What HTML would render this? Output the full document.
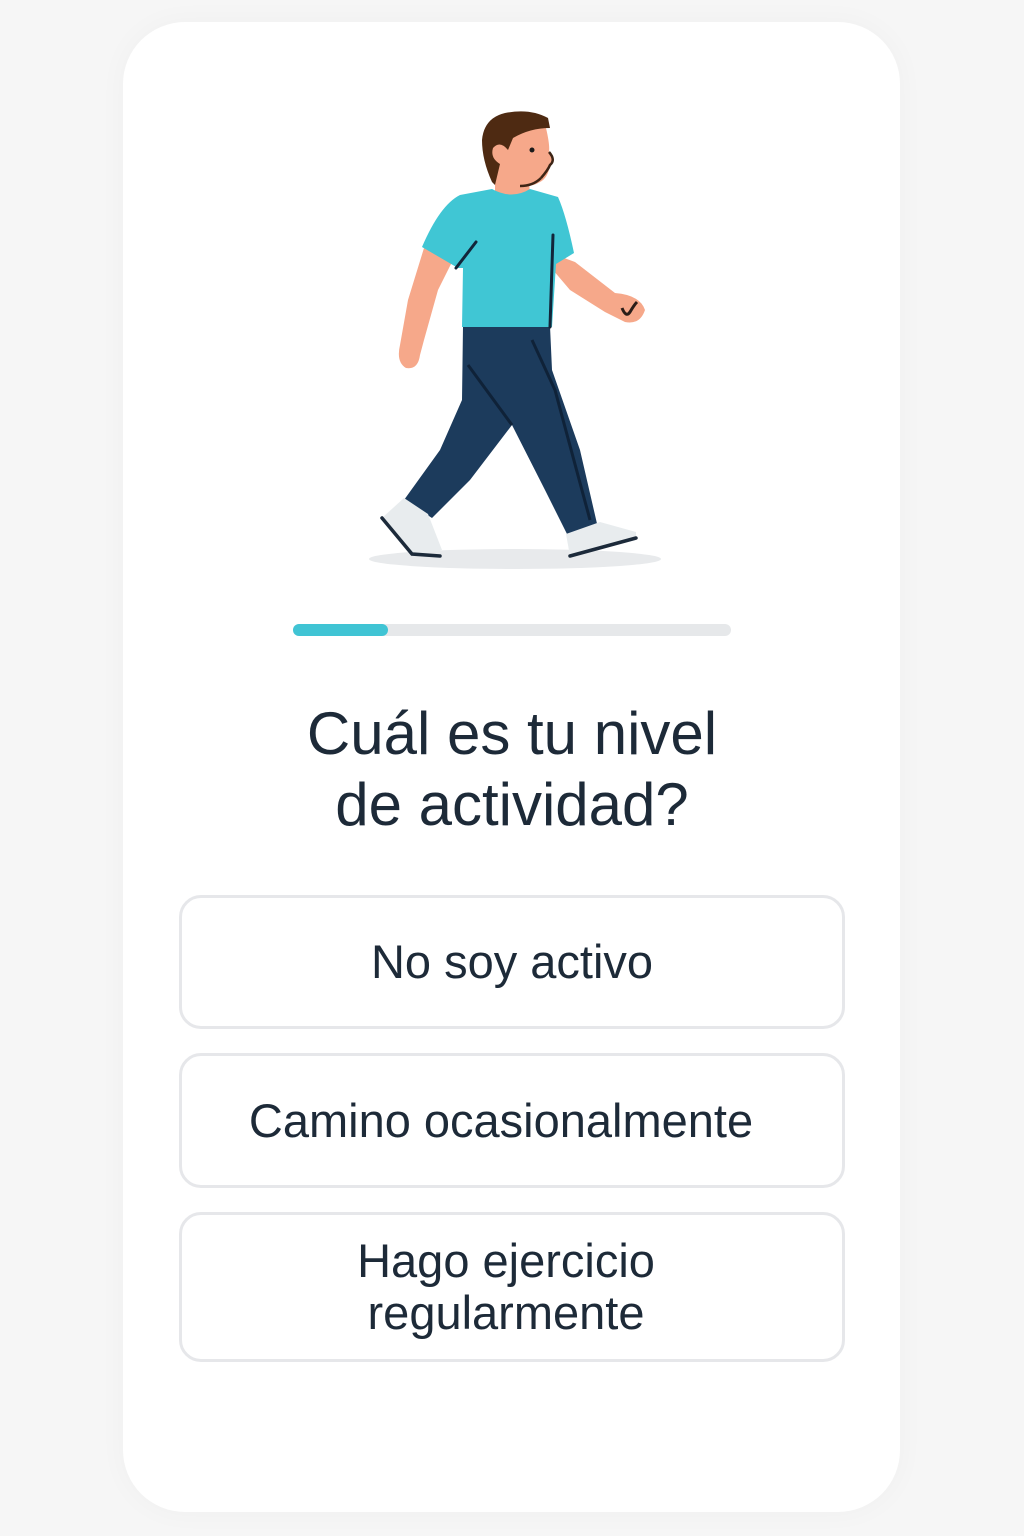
<!DOCTYPE html>
<html><head><meta charset="utf-8"><style>
html,body{margin:0;padding:0;}
body{width:1024px;height:1536px;background:#f6f6f6;position:relative;overflow:hidden;font-family:"Liberation Sans",sans-serif;color:#1d2a38;}
.card{position:absolute;left:123px;top:22px;width:777px;height:1490px;background:#fff;border-radius:62px;box-shadow:0 0 30px rgba(0,0,0,0.03);}
.bar{position:absolute;left:293px;top:624px;width:438px;height:12px;border-radius:6px;background:#e6e8ea;}
.bar i{position:absolute;left:0;top:0;width:95px;height:12px;border-radius:6px;background:#40c4d4;}
.title{position:absolute;left:0;width:1024px;top:698px;text-align:center;font-size:60px;line-height:71px;font-weight:500;color:#1d2a38;}
.btn{position:absolute;left:179px;width:660px;border:3px solid #e6e7ea;border-radius:22px;box-sizing:content-box;display:flex;align-items:center;justify-content:center;text-align:center;font-size:47px;line-height:52px;color:#1d2a38;}
svg{position:absolute;left:0;top:0;}
</style></head><body>
<div class="card"></div>
<svg width="1024" height="600" viewBox="0 0 1024 600">
<ellipse cx="515" cy="559" rx="146" ry="10" fill="#e8eaec"/>
<path d="M424 248 L408 300 L400 345 Q396 362 406 368 Q418 370 420 355 L424 340 L438 290 L452 262 Z" fill="#f6a88a"/>
<path d="M556 255 L575 262 L615 293 Q640 295 645 310 Q640 325 625 322 L605 312 L570 290 L553 270 Z" fill="#f6a88a"/>
<path d="M622 308 Q626 318 630 312 Q634 305 637 302" stroke="#2a1d18" stroke-width="3" fill="none"/>
<path d="M463 326 L550 326 L552 370 L580 450 L598 528 L568 536 L545 490 L512 425 L470 480 L432 518 L404 500 L440 450 L462 400 Z" fill="#1c3b5c"/>
<path d="M468 365 L512 425" stroke="#0f2238" stroke-width="3" fill="none"/>
<path d="M532 340 L555 390 L590 520" stroke="#0f2238" stroke-width="3" fill="none"/>
<path d="M382 518 L404 498 L428 514 L442 550 L412 556 Z" fill="#e8ecee"/>
<path d="M382 518 L412 554 L440 556" stroke="#1c2a3a" stroke-width="3.5" fill="none" stroke-linecap="round"/>
<path d="M566 534 L600 522 L636 532 L636 540 L570 556 Z" fill="#e8ecee"/>
<path d="M570 556 L636 538" stroke="#1c2a3a" stroke-width="3.5" fill="none" stroke-linecap="round"/>
<path d="M495 170 L528 170 L530 195 L495 195 Z" fill="#f6a88a"/>
<path d="M492 189 Q512 200 530 189 L558 197 Q566 215 574 253 L556 264 L552 327 L462 327 L463 268 L458 268 L422 247 Q440 205 460 195 Z" fill="#40c6d4"/>
<path d="M476 242 L456 268" stroke="#12263a" stroke-width="3" fill="none" stroke-linecap="round"/>
<path d="M553 235 L550 327" stroke="#12263a" stroke-width="3" fill="none" stroke-linecap="round"/>
<path d="M500 125 L546 128 Q550 145 549 152 Q556 160 550 165 Q548 178 540 182 Q530 188 520 185 L498 180 Q488 160 492 140 Z" fill="#f6a88a"/>
<path d="M541 178 Q548 170 550 165 Q556 160 549 152" stroke="#3d2415" stroke-width="2.5" fill="none"/>
<path d="M520 186 Q533 186 541 178" stroke="#3d2415" stroke-width="2.5" fill="none"/>
<path d="M492 182 Q482 160 482 140 Q484 118 505 113 Q530 108 548 118 L550 128 Q530 128 513 138 L508 150 Q500 140 493 148 Q490 158 500 164 L495 185 Z" fill="#4e2a12"/>
<circle cx="532" cy="150" r="2.5" fill="#1a1a1a"/>
</svg>
<div class="bar"><i></i></div>
<div class="title">Cuál es tu nivel<br>de actividad?</div>
<div class="btn" style="top:895px;height:128px;">No soy activo</div>
<div class="btn" style="top:1053px;height:129px;"><span style="margin-left:-22px">Camino ocasionalmente</span></div>
<div class="btn" style="top:1212px;height:144px;"><span style="margin-left:-12px">Hago ejercicio<br>regularmente</span></div>
</body></html>
